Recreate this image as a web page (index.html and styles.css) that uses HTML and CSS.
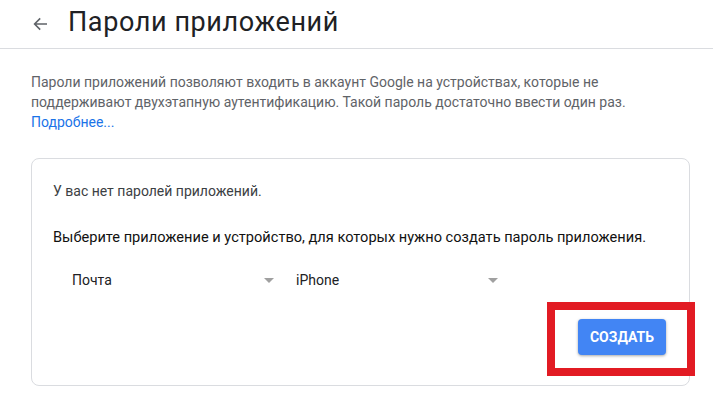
FILE: index.html
```html
<!DOCTYPE html>
<html lang="ru">
<head>
  <meta charset="UTF-8">
  <title>Пароли приложений</title>
  <link rel="stylesheet" href="styles.css">
</head>
<body>
  <header class="top-bar">
    <svg class="back-arrow" width="16" height="16" viewBox="0 0 16 16">
      <path d="M15 8H2.8M8.2 2.4L2.6 8l5.6 5.6" fill="none" stroke="#5f6368" stroke-width="1.6"/>
    </svg>
    <h1 class="page-title">Пароли приложений</h1>
  </header>

  <p class="intro">
    Пароли приложений позволяют входить в аккаунт Google на устройствах, которые не
    поддерживают двухэтапную аутентификацию. Такой пароль достаточно ввести один раз.
    <br><a href="#" class="more-link">Подробнее...</a>
  </p>

  <div class="card">
    <p class="empty-note">У вас нет паролей приложений.</p>
    <p class="choose-note">Выберите приложение и устройство, для которых нужно создать пароль приложения.</p>

    <div class="select-row">
      <div class="fake-select">
        <span>Почта</span>
        <span class="caret"></span>
      </div>
      <div class="fake-select">
        <span>iPhone</span>
        <span class="caret"></span>
      </div>
    </div>

    <div class="actions">
      <div class="highlight"></div>
      <button class="create-btn">Создать</button>
    </div>
  </div>
</body>
</html>
```

FILE: styles.css
```css
body {
  margin: 0;
  background: #fff;
  font-family: Roboto, "Noto Sans", Arial, sans-serif;
  color: #202124;
}

.top-bar {
  display: flex;
  align-items: center;
  height: 48px;
  padding-left: 32px;
  border-bottom: 1px solid #dadce0;
}

.back-arrow {
  flex: none;
}

.page-title {
  margin: 0 0 5px 20px;
  font-size: 27px;
  font-weight: 400;
  color: #202124;
  letter-spacing: 0.6px;
}

.intro {
  margin: 23px 23px 0 31px;
  font-size: 14px;
  line-height: 20px;
  color: #5f6368;
}

.more-link {
  color: #1a73e8;
  text-decoration: none;
}

.card {
  margin: 26px 23px 0 31px;
  padding: 22px 23px 30px 21px;
  border: 1px solid #dadce0;
  border-radius: 8px;
}

.card p {
  margin: 0;
  font-size: 14px;
  line-height: 20px;
}

.empty-note {
  color: #3c4043;
}

.choose-note {
  margin-top: 26px !important;
  color: #111;
  font-size: 14.6px !important;
}

.select-row {
  display: flex;
  gap: 12px;
  margin-top: 23px;
  padding-left: 19px;
}

.fake-select {
  display: flex;
  align-items: center;
  justify-content: space-between;
  width: 202px;
  height: 20px;
  padding-right: 10px;
  font-size: 14px;
  color: #202124;
}

.caret {
  width: 0;
  height: 0;
  border-left: 5px solid transparent;
  border-right: 5px solid transparent;
  border-top: 5px solid #a0a0a0;
}

.actions {
  position: relative;
  display: flex;
  justify-content: flex-end;
  margin-top: 29px;
}

.create-btn {
  width: 88px;
  height: 36px;
  border: none;
  border-radius: 4px;
  background: #4285f4;
  color: #fff;
  font-family: Roboto, Arial, sans-serif;
  font-size: 14px;
  font-weight: 700;
  text-transform: uppercase;
  box-shadow: 0 1px 3px rgba(0, 0, 0, 0.35);
}

.highlight {
  position: absolute;
  right: -29px;
  top: -17px;
  width: 132px;
  height: 58px;
  border: 8px solid #e21b23;
}
```
